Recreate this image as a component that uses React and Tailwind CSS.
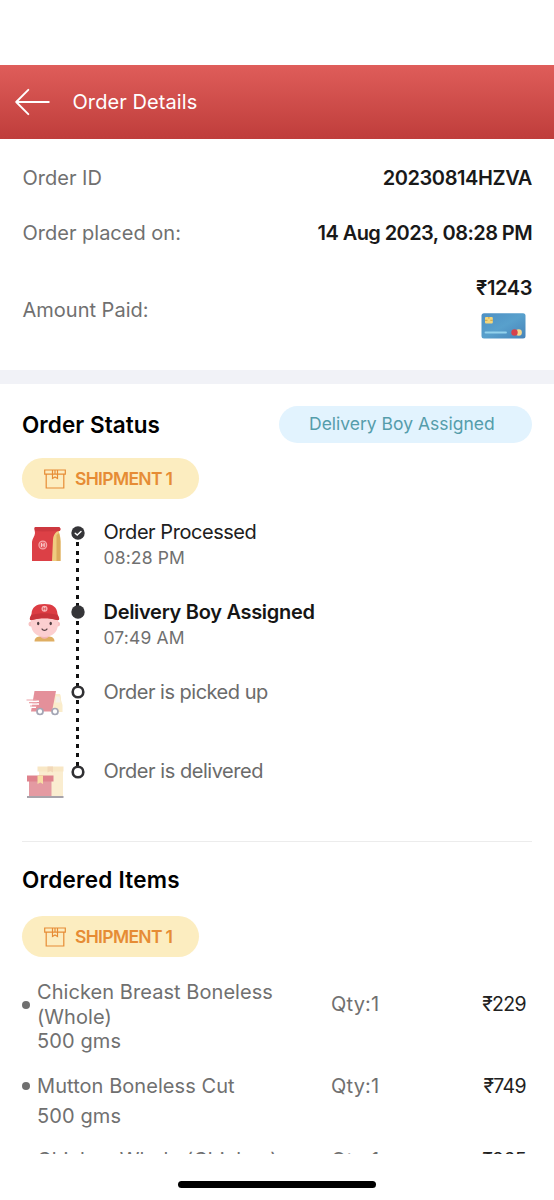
import clsx from "clsx";

const details = [
  { label: "Order ID", value: "20230814HZVA", tracking: "tracking-[-0.4px]" },
  { label: "Order placed on:", value: "14 Aug 2023, 08:28 PM", tracking: "tracking-[-0.58px]" },
];

const steps = [
  { title: "Order Processed", time: "08:28 PM", icon: BagIcon, state: "done", text: "text-[#202020] tracking-[-0.45px]" },
  { title: "Delivery Boy Assigned", time: "07:49 AM", icon: BoyIcon, state: "current", text: "text-[#151515] font-semibold tracking-[-0.3px]" },
  { title: "Order is picked up", icon: TruckIcon, state: "todo", text: "text-[#6b6b6b] tracking-[-0.5px]" },
  { title: "Order is delivered", icon: BoxesIcon, state: "todo", text: "text-[#6b6b6b] tracking-[-0.46px]" },
];

const items = [
  { name: "Chicken Breast Boneless (Whole)", weight: "500 gms", qty: 1, price: 229 },
  { name: "Mutton Boneless Cut", weight: "500 gms", qty: 1, price: 749 },
  { name: "Chicken Whole (Chicken)", weight: "500 gms", qty: 1, price: 265 },
];

function BagIcon() {
  return (
    <svg width="40" height="40" viewBox="0 0 40 40" fill="none">
      <path d="M28 5h6c1 1 .5 3 0 4 1 3 1.500 6 1.500 9v20H26V16z" fill="#efcb7f" />
      <path d="M31.500 12l2.500-2c1 3 1.500 6 1.500 9v19h-4z" fill="#dcab5c" />
      <path d="M11 4h22.500c2.500 0 2.500 4 .5 4-3.500.3-5.500 4-6 8.500L27 38H7V19c0-3 3-6 3-9s-2-6 1-6z" fill="#dc4046" />
      <path d="M11 4h22.500c2.500 0 2.500 4 .5 4-8 0-16 1-24 0 0-2-1-4 1-4z" fill="#cd383f" />
      <circle cx="17.800" cy="22" r="3.900" fill="#e86065" stroke="#f5a9ab" strokeWidth="1.100" />
      <path d="M16.500 20v4M19.200 20v4M16.500 22h2.700" stroke="#fbd7d7" strokeWidth=".9" />
    </svg>
  );
}

function BoyIcon() {
  return (
    <svg width="40" height="40" viewBox="0 0 40 40" fill="none">
      <path d="M9.500 39.500c0-4 3-5 6-5h8c3 0 6 1 6 5z" fill="#dfae62" />
      <path d="M15 33h9c0 5-9 5-9 0z" fill="#f4b5b4" />
      <circle cx="6" cy="22" r="2.500" fill="#f8c2c2" />
      <circle cx="32.500" cy="22" r="2.500" fill="#f8c2c2" />
      <path d="M6 15h27v7c0 8-6 13-13.500 13S6 30 6 22z" fill="#fccfd0" />
      <path d="M6.500 12C7 5 11 2 19.500 2S32 5 32.500 12l1.500 3.500c.5 2 0 3-2 2.500-8-2.500-17-2.500-25 0-2 .5-2.500-.5-2-2.500z" fill="#dc3c43" />
      <path d="M6.500 13c8-2.500 18-2.500 26 0l1.500 3c.3 1.500 0 2.300-2 2-8-2.500-17-2.500-25 0-2 .3-2.300-.5-2-2z" fill="#c8343b" />
      <circle cx="19.500" cy="6.800" r="3" fill="#f8b9ba" />
      <path d="M18.300 5.300v3M20.700 5.300v3M18.300 6.800h2.400" stroke="#d8484d" strokeWidth=".8" />
      <ellipse cx="13.200" cy="21.500" rx="1.200" ry="1.700" fill="#4b3b3e" />
      <ellipse cx="25.700" cy="21.500" rx="1.200" ry="1.700" fill="#4b3b3e" />
      <path d="M17 27c1 1.800 4 1.800 5 0" stroke="#584044" strokeWidth="1.300" strokeLinecap="round" />
    </svg>
  );
}

function TruckIcon() {
  return (
    <svg width="40" height="40" viewBox="0 0 40 40" fill="none">
      <path d="M28 12h7c1 2 1 4 1 6l1.500 5v7H25z" fill="#faeccb" />
      <path d="M31 14.500h3.500l1 6h-5z" fill="#f4f0e8" />
      <path d="M9.500 9H31l-4 20.500H6z" fill="#e4909a" />
      <path d="M2 19.300h12M4 22h10M4 25.300h7" stroke="#fff" strokeWidth="1.600" />
      <path d="M1.500 18h10M4 20.700h8M5 24h7" stroke="#eba4aa" strokeWidth="1.200" />
      <circle cx="15" cy="29.500" r="3" fill="#fff" stroke="#a4a6b5" strokeWidth="1.700" />
      <circle cx="30" cy="29.500" r="3" fill="#fff" stroke="#a4a6b5" strokeWidth="1.700" />
    </svg>
  );
}

function BoxesIcon() {
  return (
    <svg width="40" height="40" viewBox="0 0 40 40" fill="none">
      <path d="M14 8h24v27H14z" fill="#faedd0" />
      <path d="M12.500 4.500h26v5h-26z" fill="#f8e7c5" />
      <path d="M22.500 4.500h5.500v6l-2.700-1.500-2.800 1.500z" fill="#f2d8b8" />
      <path d="M4 17h22.500v17.500H4z" fill="#e49aa2" />
      <path d="M2 13.500h26.500v6H2z" fill="#df828d" />
      <path d="M12.500 13.500H18V22l-2.700-1.500-2.800 1.500z" fill="#f8dda5" />
      <path d="M2 35h36.500" stroke="#a7a3aa" strokeWidth="2" />
    </svg>
  );
}

function CardIcon() {
  return (
    <svg width="45" height="26" viewBox="0 0 45 26" fill="none">
      <defs>
        <linearGradient id="card" x1="0" y1="0" x2="1" y2="1">
          <stop stopColor="#4e90c4" />
          <stop offset=".5" stopColor="#58a0cc" />
          <stop offset="1" stopColor="#4683b9" />
        </linearGradient>
      </defs>
      <rect x=".5" y=".3" width="44" height="25.300" rx="2.500" fill="url(#card)" />
      <rect x="4" y="4" width="7.800" height="6.500" rx="1" fill="#f4d67c" />
      <path d="M4 7.300h2.500M9.300 7.300h2.500M7.900 4v1.700" stroke="#c99c3d" strokeWidth=".9" />
      <path d="M4.500 19.500h20.500" stroke="#93d2ec" strokeWidth="1.800" strokeLinecap="round" />
      <circle cx="37.700" cy="19.500" r="3.200" fill="#f6d78d" />
      <circle cx="33.500" cy="19.500" r="3.200" fill="#d8414a" />
    </svg>
  );
}

function Dot({ state }) {
  return (
    <svg className="relative" width="14" height="14" viewBox="0 0 14 14" fill="none">
      {state === "todo" ? (
        <circle cx="7" cy="7" r="5.300" fill="#fff" stroke="#303033" strokeWidth="2.600" />
      ) : (
        <circle cx="7" cy="7" r="6.700" fill="#353538" />
      )}
      {state === "done" && (
        <path d="M4.200 7.200l2 1.900 3.800-3.700" stroke="#fff" strokeWidth="1.400" strokeLinecap="round" />
      )}
    </svg>
  );
}

function ShipmentBadge() {
  return (
    <div className="flex h-[41px] w-[177px] items-center rounded-full bg-[#fcedc0] pl-[22px] text-[#e68c35]">
      <svg width="22" height="20" viewBox="0 0 22 20" fill="none" stroke="currentColor" strokeWidth="1.200">
        <path d="M.7 1h20.600v4.200H.7zM2.200 5.200V19h17.600V5.200M8.500 1v4.200M13.500 1v4.200M8.500 5.200v4.300L11 8l2.500 1.500V5.200M11 1v4" />
      </svg>
      <span className="ml-[9px] pt-px text-[17.500px] font-semibold tracking-[-0.66px]">SHIPMENT 1</span>
    </div>
  );
}

export default function App() {
  return (
    <div className="flex h-[1200px] w-[554px] flex-col overflow-hidden bg-white font-['Inter',sans-serif] text-[20px] text-[#707070]">
      {/* Header */}
      <header className="mt-[65px] flex h-[74px] shrink-0 items-center bg-linear-to-b from-[#df5d5a] to-[#bf3d3b] pl-[15px] text-white">
        <svg width="35" height="28" viewBox="0 0 35 28" fill="none" stroke="currentColor" strokeWidth="1.900" strokeLinecap="round" strokeLinejoin="round">
          <path d="M13.300 1.800L1.200 14l12.100 12.200M1.200 14h32.600" />
        </svg>
        <h1 className="ml-[22.500px] tracking-[0.080px]">Order Details</h1>
      </header>

      <main className="h-[1015px] shrink-0 overflow-hidden">
        {/* Order summary */}
        <section className="flex h-[231px] flex-col gap-[25px] pt-6 pr-[22px] pl-[22.500px]">
          {details.map((d) => (
            <div key={d.label} className="flex h-[30px] items-center justify-between">
              <span>{d.label}</span>
              <span className={clsx("font-semibold text-[#191919]", d.tracking)}>{d.value}</span>
            </div>
          ))}
          <div className="flex h-[74px] items-center justify-between">
            <span>Amount Paid:</span>
            <div className="flex flex-col items-end">
              <span className="h-[30px] leading-[30px] font-semibold tracking-[-0.4px] text-[#191919]">₹1243</span>
              <div className="mt-[10px] mr-[6px] h-[34px]">
                <CardIcon />
              </div>
            </div>
          </div>
        </section>

        <div className="h-[14px] bg-[#f1f2f7]" />

        {/* Shipment progress */}
        <section className="mx-[22px] flex h-[458px] flex-col items-start border-b border-[#ececec] pt-[22px]">
          <div className="flex h-[37px] w-full items-center justify-between">
            <h2 className="text-[22.500px] font-semibold tracking-[0.050px] text-black">Order Status</h2>
            <span className="flex h-full w-[253px] items-center rounded-full bg-[#e2f3fe] pl-[30px] text-[17.500px] text-[#559dab]">
              Delivery Boy Assigned
            </span>
          </div>
          <div className="mt-[15px]">
            <ShipmentBadge />
          </div>
          <div className="relative mt-[20px] w-full">
            <div className="absolute top-[14px] left-[54px] h-[240px] w-[3px] bg-[repeating-linear-gradient(to_bottom,#111_0px,#111_4px,transparent_4px,transparent_8.800px)]" />
            {steps.map(({ title, time, icon: Icon, state, text }) => (
              <div key={title} className="flex h-[79.800px] items-start">
                <div className="mt-[3.500px] w-[48.500px] pl-[2.500px]">
                  <Icon />
                </div>
                <div className="mt-[6.500px] w-[33px]">
                  <Dot state={state} />
                </div>
                <div>
                  <p className={clsx("h-[26px] leading-[26px]", text)}>{title}</p>
                  {time && <p className="h-[26px] text-[17.500px] leading-[26px] tracking-[0.150px]">{time}</p>}
                </div>
              </div>
            ))}
          </div>
        </section>

        {/* Items */}
        <section className="px-[22px] pt-[21px]">
          <h2 className="h-[34px] text-[22.500px] leading-[34px] font-semibold tracking-[0.250px] text-black">Ordered Items</h2>
          <div className="mt-[19px]">
            <ShipmentBadge />
          </div>
          <ul className="mt-[23px] flex flex-col gap-[15px]">
            {items.map((item) => (
              <li key={item.name}>
                <div className="flex min-h-[35px] items-center leading-[24.500px]">
                  <span className="h-2 w-2 shrink-0 rounded-full bg-[#707070]" />
                  <span className="ml-[7px] w-[294px] pr-[40px] tracking-[0.060px]">{item.name}</span>
                  <span className="tracking-[0.200px]">Qty:{item.qty}</span>
                  <span className="ml-auto pr-[6px] text-[19.500px] tracking-[-0.650px] text-[#222]">₹{item.price}</span>
                </div>
                <p className="pl-[15px] leading-[24.500px] tracking-[0.100px]">{item.weight}</p>
              </li>
            ))}
          </ul>
        </section>
      </main>

      {/* Home indicator */}
      <div className="mx-auto mt-[27px] h-[7px] w-[198px] shrink-0 rounded-full bg-black" />
    </div>
  );
}
